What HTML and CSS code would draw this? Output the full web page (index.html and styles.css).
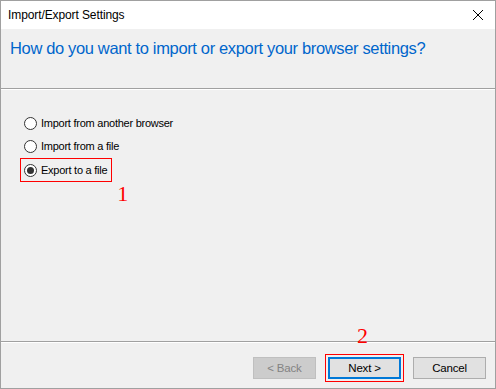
FILE: index.html
```html
<!DOCTYPE html>
<html lang="en">
<head>
    <meta charset="UTF-8">
    <title>Import/Export Settings</title>
    <link rel="stylesheet" href="styles.css">
</head>
<body>
    <div class="dialog">
        <div class="title-bar">
            <div class="title">Import/Export Settings</div>
            <svg class="close" width="12" height="12" viewBox="0 0 12 12">
                <path d="M1 1 L11 11 M11 1 L1 11" stroke="#000" stroke-width="1" fill="none"/>
            </svg>
        </div>

        <div class="header">
            <div class="heading">How do you want to import or export your browser settings?</div>
        </div>

        <div class="content">
            <label class="option">
                <span class="radio"></span>
                <span>Import from another browser</span>
            </label>
            <label class="option">
                <span class="radio"></span>
                <span>Import from a file</span>
            </label>
            <div class="marked-row">
                <label class="option selected">
                    <span class="radio checked"></span>
                    <span>Export to a file</span>
                </label>
                <span class="step step-one">1</span>
            </div>
        </div>

        <div class="footer">
            <div class="step-two-wrap">
                <span class="step">2</span>
            </div>
            <div class="buttons">
                <button class="btn disabled">&lt; Back</button>
                <div class="marked-btn">
                    <button class="btn primary">Next &gt;</button>
                </div>
                <button class="btn">Cancel</button>
            </div>
        </div>
    </div>
</body>
</html>
```

FILE: styles.css
```css
:root {
    --face: #f0f0f0;
    --edge: #a0a0a0;
    --blue: #0066cc;
    --mark: #ff0000;
}

* {
    margin: 0;
    padding: 0;
    box-sizing: border-box;
}

body {
    width: 496px;
    height: 389px;
    font-family: 'Liberation Sans', Arial, sans-serif;
    font-size: 11px;
    letter-spacing: -0.25px;
    color: #000;
    background: #fff;
}

.dialog {
    width: 496px;
    height: 389px;
    border: 1px solid var(--edge);
    display: flex;
    flex-direction: column;
    background: var(--face);
}

.title-bar {
    height: 28px;
    background: #fff;
    display: flex;
    align-items: center;
    justify-content: space-between;
    padding: 0 11px 1px 7px;
}

.title {
    font-size: 12px;
    letter-spacing: -0.1px;
}

.header {
    height: 60px;
    border-bottom: 1px solid var(--edge);
    box-shadow: 0 1px 0 #fff;
    padding: 10px 9px 0;
}

.heading {
    color: var(--blue);
    font-size: 16.5px;
    letter-spacing: -0.35px;
}

.content {
    flex: 1;
    padding: 26px 0 0 20px;
    display: flex;
    flex-direction: column;
    gap: 7px;
    border-bottom: 1px solid var(--edge);
    box-shadow: 0 1px 0 #fff;
}

.option {
    display: flex;
    align-items: center;
    gap: 4px;
    height: 16px;
    padding-left: 3px;
}

.radio {
    width: 13px;
    height: 13px;
    border: 1px solid #333;
    border-radius: 50%;
    background: #fff;
    display: flex;
    align-items: center;
    justify-content: center;
}

.radio.checked::after {
    content: "";
    width: 7px;
    height: 7px;
    border-radius: 50%;
    background: #333;
}

.marked-row {
    display: flex;
    align-items: flex-start;
    gap: 5px;
    margin-left: -1px;
}

.option.selected {
    border: 1px solid var(--mark);
    height: 24px;
    padding: 0 4px 0 3px;
    margin-top: -3px;
}

.step {
    color: var(--mark);
    font-family: 'Liberation Serif', 'Times New Roman', serif;
    font-size: 22px;
    line-height: 22px;
    letter-spacing: 0;
}

.step-one {
    margin-top: 22px;
}

.footer {
    height: 46px;
    position: relative;
    display: flex;
    justify-content: flex-end;
    align-items: center;
    padding: 6px 9px 0 0;
}

.step-two-wrap {
    position: absolute;
    left: 356px;
    top: -17px;
}

.buttons {
    display: flex;
    align-items: center;
    gap: 12px;
}

.btn {
    width: 63px;
    height: 22px;
    font-family: inherit;
    font-size: 11.5px;
    letter-spacing: -0.2px;
    background: #e1e1e1;
    border: 1px solid #adadad;
    color: #000;
}

.btn.disabled {
    background: #cccccc;
    border-color: #bfbfbf;
    color: #838383;
}

.btn.primary {
    width: 71px;
    border: 2px solid #0078d7;
}

.marked-btn {
    border: 1px solid var(--mark);
    padding: 2px;
    margin: 0 -3px;
}

.btn:last-child {
    width: 73px;
}
```
